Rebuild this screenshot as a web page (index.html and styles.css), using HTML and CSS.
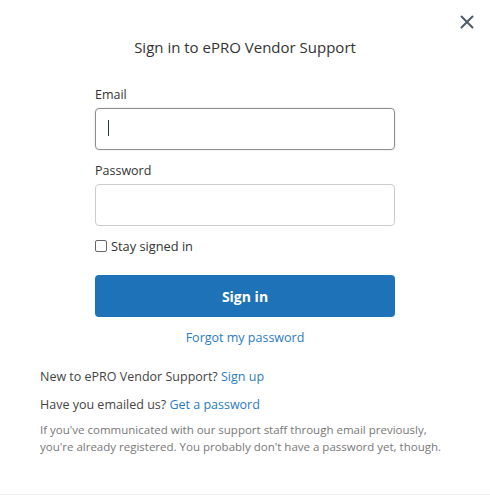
FILE: index.html
```html
<!DOCTYPE html>
<html>
<head>
<meta charset="utf-8">
<link rel="stylesheet" href="styles.css">
</head>
<body>
<div class="modal">
  <button class="close" aria-label="Close">
    <svg width="14" height="14" viewBox="0 0 14 14"><path d="M1.5 1.5L12.5 12.5M12.5 1.5L1.5 12.5" stroke="#505a64" stroke-width="2" stroke-linecap="round"/></svg>
  </button>
  <h1 class="title">Sign in to ePRO Vendor Support</h1>
  <form class="form">
    <label class="label">Email</label>
    <div class="field focused"><span class="caret"></span></div>
    <label class="label pw">Password</label>
    <div class="field"></div>
    <label class="check"><span class="box"></span>Stay signed in</label>
    <div class="btn">Sign in</div>
    <a class="forgot">Forgot my password</a>
  </form>
  <div class="footer">
    <p class="line">New to ePRO Vendor Support? <a>Sign up</a></p>
    <p class="line second">Have you emailed us? <a>Get a password</a></p>
    <p class="note">If you've communicated with our support staff through email previously, you're already registered. You probably don't have a password yet, though.</p>
  </div>
</div>
</body>
</html>
```
FILE: styles.css
```css
* { box-sizing: border-box; }
html, body { margin: 0; padding: 0; background: #fff; }
body {
  font-family: "Open Sans", "Noto Sans", sans-serif;
  color: #333;
  width: 490px;
  height: 495px;
}
.modal {
  position: relative;
  width: 490px;
  height: 495px;
  padding-top: 36px;
  border-bottom: 1px solid #eee;
}
.close {
  position: absolute;
  top: 15px;
  left: 460px;
  background: none;
  border: none;
  padding: 0;
  width: 14px;
  height: 14px;
  display: flex;
}
.title {
  margin: 0;
  font-size: 15px;
  font-weight: 400;
  text-align: center;
  color: #333;
  line-height: 22px;
}
.form {
  width: 300px;
  margin: 28px 0 0 95px;
  display: flex;
  flex-direction: column;
}
.label {
  font-size: 12.5px;
  color: #333;
  line-height: 18px;
  margin-bottom: 4px;
}
.label.pw { margin-top: 12px; }
.field {
  height: 42px;
  border: 1px solid #ccc;
  border-radius: 4px;
  position: relative;
}
.field.focused {
  border-color: #8d8d8d;
  box-shadow: 0 0 2px rgba(0,0,0,0.15);
}
.caret {
  position: absolute;
  left: 12px;
  top: 11px;
  width: 1px;
  height: 16px;
  background: #2b3640;
}
.check {
  display: flex;
  align-items: center;
  font-size: 12.8px;
  color: #333;
  margin-top: 11px;
  line-height: 18px;
}
.box {
  width: 12px;
  height: 12px;
  border: 1px solid #666;
  border-radius: 2px;
  margin-right: 4px;
}
.btn {
  margin-top: 20px;
  height: 42px;
  border-radius: 4px;
  background: #1e72b8;
  color: #fff;
  font-weight: 700;
  font-size: 14px;
  display: flex;
  align-items: center;
  justify-content: center;
}
.forgot {
  margin-top: 12px;
  text-align: center;
  color: #2b7bc0;
  font-size: 12.5px;
  line-height: 18px;
}
.footer {
  margin: 21px 0 0 40px;
  width: 410px;
}
.line {
  margin: 0;
  font-size: 12.5px;
  line-height: 18px;
  color: #444;
}
.line.second { margin-top: 10px; }
.line a { color: #2b7bc0; }
.note {
  margin: 7px 0 0;
  font-size: 11.5px;
  line-height: 17px;
  color: #777;
}
```
